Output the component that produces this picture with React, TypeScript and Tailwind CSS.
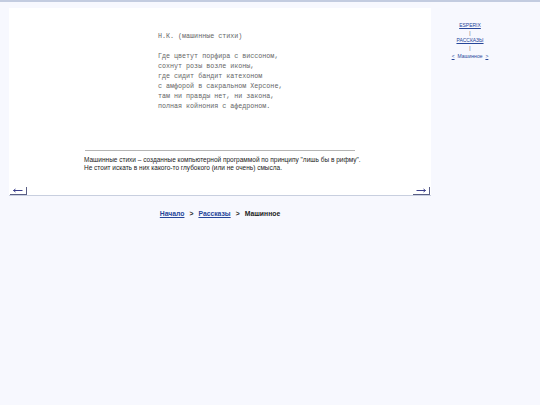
import React from "react";

const poem = [
  "Н.К. (машинные стихи)",
  "",
  "Где цветут порфира с виссоном,",
  "сохнут розы возле иконы,",
  "где сидит бандит катехоном",
  "с амфорой в сакральном Херсоне,",
  "там ни правды нет, ни закона,",
  "полная койнония с афедроном.",
];

function Arrow({ dir }: { dir: "left" | "right" }) {
  return (
    <div className="w-[17px] h-[8px] border-r border-b border-[#5a5f86] flex items-center justify-center">
      <svg width="10" height="5" viewBox="0 0 10 5">
        {dir === "left" ? (
          <path d="M0.5 2.5 L2.5 1 M0.5 2.5 L2.5 4 M0.5 2.5 H9.5" stroke="#3b3f8c" strokeWidth="1" fill="none" />
        ) : (
          <path d="M9.5 2.5 L7.5 1 M9.5 2.5 L7.5 4 M0.5 2.5 H9.5" stroke="#3b3f8c" strokeWidth="1" fill="none" />
        )}
      </svg>
    </div>
  );
}

export default function App() {
  return (
    <div className="w-[540px] h-[405px] bg-[#f7f8fe] border-t-2 border-[#c3cce0] overflow-hidden" style={{ fontFamily: '"Liberation Sans", Arial, sans-serif' }}>
      <div className="flex">
        <div className="ml-[9px] mt-[6px] w-[422px]">
          <div className="bg-white h-[188px] border-b border-[#c8cfdf] flex flex-col">
            <div className="pl-[149px] pt-[23px] text-[6.7px] leading-[10px] text-[#666]" style={{ fontFamily: '"Liberation Mono", monospace' }}>
              {poem.map((l, i) => (
                <div key={i} className="h-[10px] whitespace-pre">{l}</div>
              ))}
            </div>
            <div className="ml-[76px] mt-[39px] w-[270px] border-t border-[#b5b5b5]" />
            <div className="ml-[75px] mt-[5px] text-[6.5px] leading-[8px] text-[#222] whitespace-nowrap">
              <div>Машинные стихи – созданные компьютерной программой по принципу "лишь бы в рифму".</div>
              <div>Не стоит искать в них какого-то глубокого (или не очень) смысла.</div>
            </div>
            <div className="mt-auto flex justify-between px-[1px]">
              <Arrow dir="left" />
              <Arrow dir="right" />
            </div>
          </div>
          <div className="mt-[14px] flex justify-center gap-[5px] text-[6.8px] font-bold leading-[8px]">
            <span className="text-[#26469a] underline">Начало</span>
            <span className="text-[#222]">&gt;</span>
            <span className="text-[#26469a] underline">Рассказы</span>
            <span className="text-[#222]">&gt;</span>
            <span className="text-[#222]">Машинное</span>
          </div>
        </div>
        <div className="w-[78px] pt-[20px] flex flex-col items-center text-[5px] leading-[7.5px] text-[#26469a]">
          <span className="underline">ESPERIX</span>
          <span className="text-[#555]">|</span>
          <span className="underline">РАССКАЗЫ</span>
          <span className="text-[#555]">|</span>
          <span className="flex gap-[3px] mt-[1px]">
            <span className="underline">&lt;</span>
            <span>Машинное</span>
            <span className="underline">&gt;</span>
          </span>
        </div>
      </div>
    </div>
  );
}
